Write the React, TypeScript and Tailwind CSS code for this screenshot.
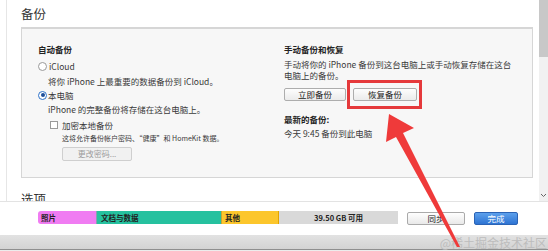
import React from "react";

function Radio({ checked }: { checked?: boolean }) {
  return checked ? (
    <span className="w-[9px] h-[9px] rounded-full border border-[#2f73c9] bg-white flex items-center justify-center">
      <span className="w-[4px] h-[4px] rounded-full bg-[#1d4f9a]" />
    </span>
  ) : (
    <span className="w-[9px] h-[9px] rounded-full border border-[#9a9a9a] bg-white" />
  );
}

function Btn({ children, w }: { children: React.ReactNode; w: string }) {
  return (
    <div
      className={`${w} h-[13px] rounded-[2px] border border-[#adadad] bg-gradient-to-b from-[#fdfdfd] to-[#ebebeb] flex items-center justify-center text-[8.5px] leading-[11px] text-[#222]`}
    >
      {children}
    </div>
  );
}

export default function App() {
  return (
    <div className="relative w-[548px] h-[251px] overflow-hidden bg-white text-[#3a3a3a] font-['Noto_Sans_CJK_SC','Noto_Sans',sans-serif]">
      <div className="flex h-[201px]">
        <div className="w-[6px]" />
        <div className="flex-1 border-l border-[#e6e6e6] pl-[14px] pr-[6px] overflow-hidden">
          <div className="pt-[6px] h-[22px] text-[12.5px] leading-[16px] text-[#333]">备份</div>
          <div className="mt-[5px] h-[151px] border border-t-2 border-[#d6d6d6] bg-[#f7f7f7] flex">
            {/* left column */}
            <div className="w-[262px] pl-[16px] pt-[14px] flex flex-col text-[8.5px] leading-[12px]">
              <div className="h-[12px] font-bold text-[#222]">自动备份</div>
              <div className="mt-[5px] h-[12px] flex items-center gap-[2px]">
                <Radio />
                <span>iCloud</span>
              </div>
              <div className="mt-[3px] h-[12px] pl-[10px]">将你 iPhone 上最重要的数据备份到 iCloud。</div>
              <div className="mt-[2px] h-[12px] flex items-center gap-[1px]">
                <Radio checked />
                <span>本电脑</span>
              </div>
              <div className="mt-[2px] h-[12px] pl-[10px]">iPhone 的完整备份将存储在这台电脑上。</div>
              <div className="mt-[4px] h-[12px] pl-[12px] flex items-center gap-[4px]">
                <span className="w-[8px] h-[8px] border border-[#9a9a9a] bg-white" />
                <span>加密本地备份</span>
              </div>
              <div className="mt-[1px] h-[12px] pl-[24px] text-[7px] leading-[12px]">
                这将允许备份帐户密码、“健康”和 HomeKit 数据。
              </div>
              <div className="mt-[3px] ml-[24px] w-[70px] h-[14px] rounded-[2px] border border-[#cfcfcf] bg-[#f1f1f1] flex items-center justify-center text-[8px] text-[#9c9c9c]">
                更改密码...
              </div>
            </div>
            {/* right column */}
            <div className="flex-1 pt-[14px] flex flex-col text-[8.5px] leading-[12px]">
              <div className="h-[12px] font-bold text-[#222]">手动备份和恢复</div>
              <div className="mt-[4px] w-[232px] leading-[11px]">
                手动将你的 iPhone 备份到这台电脑上或手动恢复存储在这台电脑上的备份。
              </div>
              <div className="mt-[7px] flex gap-[7px]">
                <Btn w="w-[62px]">立即备份</Btn>
                <div className="relative">
                  <Btn w="w-[64px]">恢复备份</Btn>
                  <div className="absolute left-[-6px] right-[-5px] top-[-8px] bottom-[-8px] border-[3px] border-[#e5393b]" />
                </div>
              </div>
              <div className="mt-[12px] h-[12px] font-bold text-[#222]">最新的备份:</div>
              <div className="mt-[2px] h-[12px]">今天 9:45 备份到此电脑</div>
            </div>
          </div>
          <div className="mt-[13px] text-[12.5px] leading-[16px] text-[#333]">选项</div>
        </div>
        {/* scrollbar */}
        <div className="w-[9px] flex flex-col">
          <div className="h-[57px] bg-[#c8c8c8]" />
          <div className="flex-1 bg-[#f1f1f1] flex flex-col justify-end items-center pb-[3px]">
            <svg width="7" height="5" viewBox="0 0 7 5">
              <path d="M1 1 L3.5 3.5 L6 1" fill="none" stroke="#666" strokeWidth="1" />
            </svg>
          </div>
        </div>
      </div>

      {/* storage bar row */}
      <div className="h-[34px] border-t border-[#e3e3e3] flex items-start pt-[9px] pl-[38px]">
        <div className="w-[360px] h-[13px] flex rounded-l-[3px] overflow-hidden text-[7.5px] leading-[13px] font-bold text-[#222]">
          <div className="w-[58px] bg-[#f07cf2] pl-[3px]">照片</div>
          <div className="w-[125px] bg-[#26c19f] pl-[4px] border-l border-[#8a9fb0]">文档与数据</div>
          <div className="w-[57px] bg-[#fcc62c] pl-[3px] border-l border-[#c8a436]">其他</div>
          <div className="flex-1 bg-[#d9d9d9] border-l border-[#e2a500] text-center">39.50 GB 可用</div>
        </div>
        <div className="ml-[9px] mt-[1px] w-[58px] h-[13px] rounded-[2px] border border-[#aaaaaa] bg-gradient-to-b from-[#fefefe] to-[#e9e9e9] flex items-center justify-center text-[8.5px] text-[#222]">
          同步
        </div>
        <div className="ml-[9px] mt-[1px] w-[44px] h-[13px] rounded-[2px] border border-[#2b63b5] bg-gradient-to-b from-[#5ca0ec] to-[#2e74d3] flex items-center justify-center text-[8.5px] text-white">
          完成
        </div>
      </div>

      {/* status bar */}
      <div className="h-[16px] flex flex-col">
        <div className="h-[14px] bg-gradient-to-b from-[#e2e2e2] to-[#d3d3d3]" />
        <div className="h-[1px] bg-[#8f8f8f]" />
        <div className="h-[1px] bg-[#ececec]" />
      </div>

      <div className="absolute right-[1px] bottom-[1px] text-[12px] leading-[14px] text-[#bdbdbd]">
        @稀土掘金技术社区
      </div>

      <svg className="absolute inset-0 pointer-events-none" width="548" height="251" viewBox="0 0 548 251">
        <polygon
          points="389,114 414,128 403,133 460,247 457,247 396,137 386,142"
          fill="#ef3a3a"
        />
      </svg>
    </div>
  );
}
